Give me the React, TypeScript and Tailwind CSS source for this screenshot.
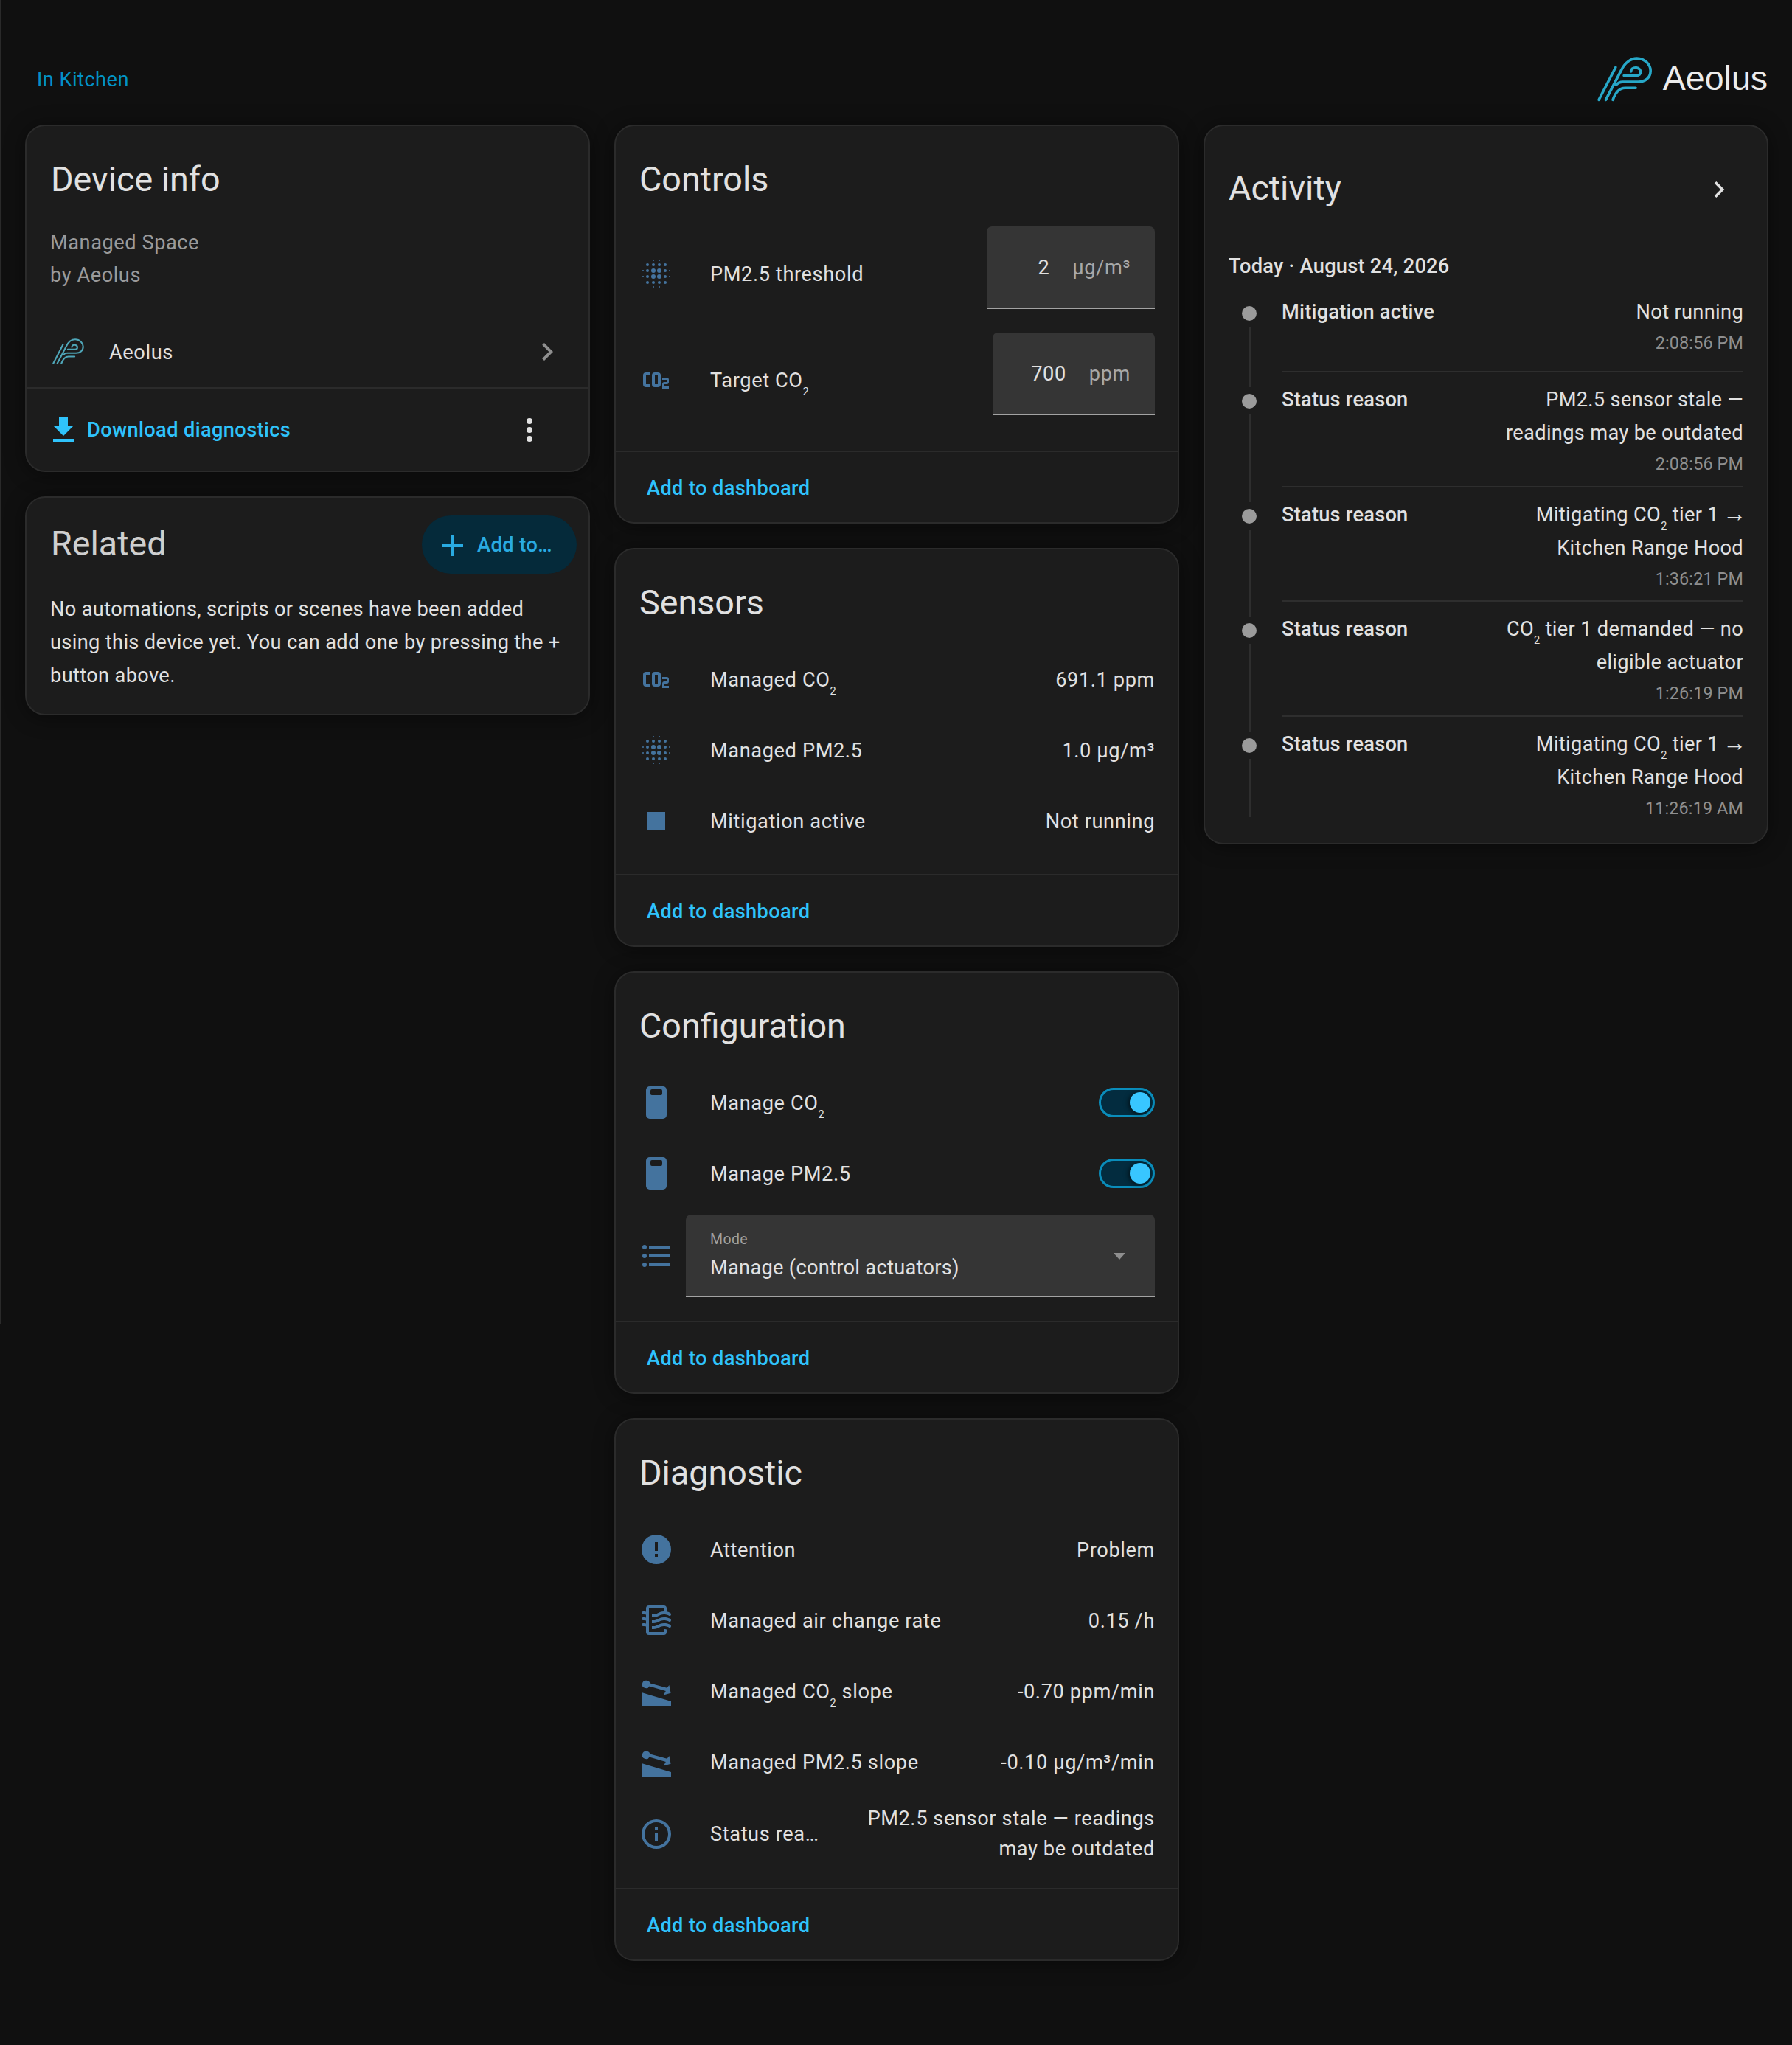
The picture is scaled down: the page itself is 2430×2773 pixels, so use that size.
import React from 'react';

const PATHS = {
  chevron: 'M8.59,16.58L13.17,12L8.59,7.41L10,6L16,12L10,18L8.59,16.58Z',
  download: 'M5,20H19V18H5M19,9H15V3H9V9H5L12,16L19,9Z',
  dots: 'M12,16A2,2 0 0,1 14,18A2,2 0 0,1 12,20A2,2 0 0,1 10,18A2,2 0 0,1 12,16M12,10A2,2 0 0,1 14,12A2,2 0 0,1 12,14A2,2 0 0,1 10,12A2,2 0 0,1 12,10M12,4A2,2 0 0,1 14,6A2,2 0 0,1 12,8A2,2 0 0,1 10,6A2,2 0 0,1 12,4Z',
  plus: 'M19,13H13V19H11V13H5V11H11V5H13V11H19V13Z',
  co2: 'M5,7A2,2 0 0,0 3,9V15A2,2 0 0,0 5,17H8V15H5V9H8V7H5M11,7A2,2 0 0,0 9,9V15A2,2 0 0,0 11,17H13A2,2 0 0,0 15,15V9A2,2 0 0,0 13,7H11M11,9H13V15H11V9M16,10.5V12H19V13.5H17.5A1.5,1.5 0 0,0 16,15V18H20.5V16.5H17.5V15H19A1.5,1.5 0 0,0 20.5,13.5V12A1.5,1.5 0 0,0 19,10.5H16Z',
  stop: 'M18,18H6V6H18V18Z',
  remote: 'M7.5,1H16.5A2.5,2.5 0 0,1 19,3.5V20.5A2.5,2.5 0 0,1 16.5,23H7.5A2.5,2.5 0 0,1 5,20.5V3.5A2.5,2.5 0 0,1 7.5,1ZM9,3A1,1 0 0,0 8,4V6A1,1 0 0,0 9,7H15A1,1 0 0,0 16,6V4A1,1 0 0,0 15,3H9Z',
  list: 'M7,5H21V7H7V5M7,13V11H21V13H7M4,4.5A1.5,1.5 0 0,1 5.5,6A1.5,1.5 0 0,1 4,7.5A1.5,1.5 0 0,1 2.5,6A1.5,1.5 0 0,1 4,4.5M4,10.5A1.5,1.5 0 0,1 5.5,12A1.5,1.5 0 0,1 4,13.5A1.5,1.5 0 0,1 2.5,12A1.5,1.5 0 0,1 4,10.5M7,19V17H21V19H7M4,16.5A1.5,1.5 0 0,1 5.5,18A1.5,1.5 0 0,1 4,19.5A1.5,1.5 0 0,1 2.5,18A1.5,1.5 0 0,1 4,16.5Z',
  alert: 'M13,13H11V7H13M13,17H11V15H13M12,2A10,10 0 0,0 2,12A10,10 0 0,0 12,22A10,10 0 0,0 22,12A10,10 0 0,0 12,2Z',
  info: 'M11,9H13V7H11M12,20C7.59,20 4,16.41 4,12C4,7.59 7.59,4 12,4C16.41,4 20,7.59 20,12C20,16.41 16.41,20 12,20M12,2A10,10 0 0,0 2,12A10,10 0 0,0 12,22A10,10 0 0,0 22,12A10,10 0 0,0 12,2M11,17H13V11H11V17Z',
  air: 'M19,18.31V20A2,2 0 0,1 17,22H7A2,2 0 0,1 5,20V16.3C4.54,16.12 3.95,16 3,16A1,1 0 0,1 2,15A1,1 0 0,1 3,14C3.82,14 4.47,14.08 5,14.21V12.3C4.54,12.12 3.95,12 3,12A1,1 0 0,1 2,11A1,1 0 0,1 3,10C3.82,10 4.47,10.08 5,10.21V8.3C4.54,8.12 3.95,8 3,8A1,1 0 0,1 2,7A1,1 0 0,1 3,6C3.82,6 4.47,6.08 5,6.21V4A2,2 0 0,1 7,2H17A2,2 0 0,1 19,4V6.16C20.78,6.47 21.54,7.13 21.71,7.29C22.1,7.68 22.1,8.32 21.71,8.71C21.32,9.1 20.8,9.09 20.29,8.71C20.29,8.71 19.25,8 17,8C15.74,8 14.91,8.41 13.95,8.9C12.91,9.41 11.74,10 10,10C9.64,10 9.31,10 9,9.96V7.95C9.3,8 9.63,8 10,8C11.26,8 12.09,7.59 13.05,7.11C14.09,6.59 15.27,6 17,6V4H7V20H17V18C18.5,18 18.97,18.29 19,18.31ZM17,10C15.27,10 14.09,10.59 13.05,11.11C12.09,11.59 11.26,12 10,12C9.63,12 9.3,12 9,11.95V13.96C9.31,14 9.64,14 10,14C11.74,14 12.91,13.41 13.95,12.9C14.91,12.41 15.74,12 17,12C19.25,12 20.29,12.71 20.29,12.71C20.8,13.09 21.32,13.1 21.71,12.71C22.1,12.32 22.1,11.68 21.71,11.29C21.54,11.13 20.41,10 17,10ZM17,14C15.27,14 14.09,14.59 13.05,15.11C12.09,15.59 11.26,16 10,16C9.63,16 9.3,16 9,15.95V17.96C9.3,18 9.64,18 10,18C11.74,18 12.91,17.41 13.95,16.9C14.91,16.41 15.74,16 17,16C19.25,16 20.29,16.71 20.29,16.71C20.8,17.09 21.32,17.1 21.71,16.71C22.1,16.32 22.1,15.68 21.71,15.29C21.54,15.13 20.41,14 17,14Z',
  slope: 'M22,19V22H2V13L22,19ZM5.3,4.9A2.6,2.6 0 0,1 7.8,6.8L19.3,9.9L20.7,8L21.8,13.4L16.9,14.7L18.4,12L7.3,8.7A2.6,2.6 0 1,1 5.3,4.9Z',
};

// mdi-blur drawn as separate dots
const BLUR_DOTS: [number, number, number][] = [
  [10, 10, 1.5], [14, 10, 1.5], [10, 14, 1.5], [14, 14, 1.5],
  [6, 6, 1], [10, 6, 1], [14, 6, 1], [18, 6, 1],
  [6, 10, 1], [18, 10, 1], [6, 14, 1], [18, 14, 1],
  [6, 18, 1], [10, 18, 1], [14, 18, 1], [18, 18, 1],
  [3, 10, 0.5], [3, 14, 0.5], [21, 10, 0.5], [21, 14, 0.5],
  [10, 3, 0.5], [14, 3, 0.5], [10, 21, 0.5], [14, 21, 0.5],
];

function Mdi({ d, className }: { d: string; className?: string }) {
  return (
    <svg viewBox="0 0 24 24" className={className} fill="currentColor" fillRule="evenodd">
      <path d={d} />
    </svg>
  );
}

function BlurIcon() {
  return (
    <svg viewBox="0 0 24 24" className="w-[48px] h-[48px] text-[#44739e]" fill="currentColor">
      {BLUR_DOTS.map(([cx, cy, r]) => (
        <circle key={`${cx}-${cy}`} cx={cx} cy={cy} r={r} />
      ))}
    </svg>
  );
}

function StateIcon({ d }: { d: string }) {
  return <Mdi d={d} className="w-[48px] h-[48px] text-[#44739e]" />;
}

function AeolusLogo({ className }: { className?: string }) {
  return (
    <svg viewBox="0 0 94 75" className={className} fill="none" stroke="currentColor" strokeWidth={3.8} strokeLinecap="round" strokeLinejoin="round">
      <path d="M9.5 66 L33.3 20" />
      <path d="M19.3 66 L41.7 23.3 C46.7 13.3 55 7.3 63.3 7.3 C75 7.3 82.7 16.7 82.7 25 C82.7 35 75 40.7 65 40.7 L43.3 40.7 C39 40.7 36.5 42 34 45" />
      <path d="M29.3 66 C33.3 55 38.3 49.3 46.7 49.3 L61.7 49.3" />
      <path d="M45 31.7 L63.3 31.7 C70 31.7 70.7 21.7 62.7 20.7 C57.3 20 55 23.3 55 26" />
    </svg>
  );
}

function Co2() {
  return (
    <>
      CO<sub className="static align-[-11px] text-[14.5px]">2</sub>
    </>
  );
}

function Arrow() {
  return <span className="ml-[-2px] mr-[-4px] font-['Liberation_Sans',sans-serif] text-[32px] leading-[0] tracking-normal">→</span>;
}

function Card({ children, className = '' }: { children: React.ReactNode; className?: string }) {
  return (
    <div className={`rounded-[27px] border-2 border-[#2b2b2b] bg-[#1c1c1c] shadow-[0_3px_28px_rgba(0,0,0,0.45)] overflow-hidden ${className}`}>
      {children}
    </div>
  );
}

function Title({ children, className = 'text-[#e1e1e1]' }: { children: React.ReactNode; className?: string }) {
  return <h2 className={`mt-[2px] ml-[1px] h-[67px] leading-[70px] text-[46.67px] tracking-normal font-normal ${className}`}>{children}</h2>;
}

function Footer() {
  return (
    <div className="h-[97px] pt-[4px] border-t-2 border-[#2b2b2b] pl-[42px] flex items-center tracking-[0.38px] font-medium text-[#2fc3fb]">
      Add to dashboard
    </div>
  );
}

function Row({ icon, label, value, children }: { icon: React.ReactNode; label: React.ReactNode; value?: React.ReactNode; children?: React.ReactNode }) {
  return (
    <div className="h-[96px] flex items-center text-[#e1e1e1]">
      <div className="w-[97px] shrink-0">{icon}</div>
      <div className="flex-1 pt-[2px]">{label}</div>
      {value && <div className="pt-[2px] text-right">{value}</div>}
      {children}
    </div>
  );
}

function NumberInput({ value, unit, width }: { value: string; unit: string; width: string }) {
  return (
    <div className="h-[144px] flex items-center text-[#e1e1e1]">
      <div className={`${width} h-[112px] mt-[-16px] pt-[2px] bg-[#353535] rounded-t-[7px] border-b-2 border-[#a3a3a3] flex items-center justify-end pr-[33px] gap-[31px] ml-auto`}>
        <span>{value}</span>
        <span className="text-[#a8a8a8]">{unit}</span>
      </div>
    </div>
  );
}

function Toggle() {
  return (
    <div className="w-[76px] h-[40px] rounded-full border-[3px] border-[#0a8dbb] bg-[#032c3f] flex items-center justify-end pr-[3px]">
      <div className="w-[28px] h-[28px] rounded-full bg-[#38c6ff] shadow-[-2px_1px_6px_rgba(0,0,0,0.6)]" />
    </div>
  );
}

function TimelineItem({ label, lines, time, pb, last }: { label: string; lines: React.ReactNode[]; time: string; pb: string; last?: boolean }) {
  return (
    <div className="flex">
      <div className="w-[56px] mr-[16px] shrink-0 flex flex-col items-center pt-[9px]">
        <div className="w-[20px] h-[20px] rounded-full bg-[#9b9b9b]" />
        <div className="w-[3px] flex-1 mt-[8px] bg-[#2e2e2e]" />
      </div>
      <div className={`flex-1 mt-[-5px] flex ${last ? 'mb-[-8px]' : 'mb-[20px] border-b-2 border-[#2e2e2e]'} ${pb}`}>
        <div className="w-[240px] shrink-0 font-medium tracking-[0.25px] text-[#e1e1e1] leading-[45px]">{label}</div>
        <div className="flex-1 text-right tracking-[0.34px]">
          {lines.map((l, i) => (
            <div key={i} className="leading-[45px] text-[#e1e1e1]">{l}</div>
          ))}
          <div className="leading-[39px] text-[23.33px] tracking-[0.15px] text-[#8f8f8f]">{time}</div>
        </div>
      </div>
    </div>
  );
}

export default function App() {
  return (
    <div className="flex w-[2430px] min-h-[2773px] bg-[#101010] font-[Roboto,sans-serif] text-[27.2px] tracking-[0.6px]">
      <div className="w-[2px] h-[1795px] shrink-0 bg-[#2a2a2a]" />
      <main className="flex-1">
        <header className="h-[169px] pl-[48px] pr-[33px] flex justify-between">
          <a className="mt-[91px] h-[34px] leading-[34px] text-[#0391c6] tracking-[0.45px]">In Kitchen</a>
          <div className="mt-[72px] h-[72px] flex items-center gap-[6px]">
            <AeolusLogo className="w-[90px] h-[72px] text-[#27a8c8]" />
            <span className="mt-[-2px] font-['Liberation_Sans',sans-serif] text-[46.5px] tracking-normal text-[#ececec]">Aeolus</span>
          </div>
        </header>

        <div className="pl-[32px] flex gap-[33px] items-start">
          {/* left column */}
          <div className="w-[766px] flex flex-col gap-[33px]">
            <Card>
              <div className="pt-[35px] px-[32px]">
                <Title>Device info</Title>
                <div className="mt-[32px] leading-[44px] tracking-[0.55px] text-[#9a9a9a]">
                  <div>Managed Space</div>
                  <div>by Aeolus</div>
                </div>
              </div>
              <div className="mt-[34px] h-[96px] pl-[31px] pr-[32px] flex items-center text-[#e1e1e1]">
                <AeolusLogo className="w-[52px] h-[42px] text-[#4fa6b8]" />
                <span className="ml-[29px] pt-[2px] flex-1">Aeolus</span>
                <Mdi d={PATHS.chevron} className="w-[48px] h-[48px] text-[#8f8f8f]" />
              </div>
              <div className="h-[113px] pt-[1px] border-t-2 border-[#2b2b2b] pl-[26px] pr-[56px] flex items-center">
                <Mdi d={PATHS.download} className="w-[48px] h-[48px] text-[#2fc3fb]" />
                <span className="ml-[8px] flex-1 tracking-[0.38px] font-medium text-[#2fc3fb]">Download diagnostics</span>
                <Mdi d={PATHS.dots} className="w-[48px] h-[48px] text-[#e1e1e1]" />
              </div>
            </Card>

            <Card>
              <div className="pt-[24px] pl-[32px] pr-[16px] flex justify-between items-start">
                <Title className="mt-[3px] text-[#cfcfcf]">Related</Title>
                <div className="w-[210px] h-[79px] pt-[2px] rounded-full bg-[#052a3a] pl-[18px] flex items-center text-[#29abe2] font-medium tracking-[0.45px]">
                  <Mdi d={PATHS.plus} className="w-[48px] h-[48px]" />
                  <span className="ml-[9px]">Add to…</span>
                </div>
              </div>
              <p className="pt-[26px] pb-[29px] px-[32px] leading-[45px] text-[#e1e1e1] tracking-[0.36px]">
                No automations, scripts or scenes have been added using this device yet. You can add one by pressing the + button above.
              </p>
            </Card>
          </div>

          {/* middle column */}
          <div className="w-[766px] flex flex-col gap-[33px]">
            <Card>
              <div className="pt-[35px] pb-[24px] px-[31px]">
                <Title>Controls</Title>
              </div>
              <div className="px-[31px] pb-[24px]">
                <div className="flex">
                  <div className="flex-1 h-[144px] flex items-center text-[#e1e1e1]">
                    <div className="w-[97px]"><BlurIcon /></div>
                    <span className="pt-[2px]">PM2.5 threshold</span>
                  </div>
                  <NumberInput value="2" unit="μg/m³" width="w-[228px]" />
                </div>
                <div className="flex">
                  <div className="flex-1 h-[144px] flex items-center text-[#e1e1e1]">
                    <div className="w-[97px]"><StateIcon d={PATHS.co2} /></div>
                    <span className="pt-[2px]">Target <Co2 /></span>
                  </div>
                  <NumberInput value="700" unit="ppm" width="w-[220px]" />
                </div>
              </div>
              <Footer />
            </Card>

            <Card>
              <div className="pt-[35px] pb-[24px] px-[31px]">
                <Title>Sensors</Title>
              </div>
              <div className="px-[31px] pb-[24px]">
                <Row icon={<StateIcon d={PATHS.co2} />} label={<>Managed <Co2 /></>} value="691.1 ppm" />
                <Row icon={<BlurIcon />} label="Managed PM2.5" value="1.0 μg/m³" />
                <Row icon={<StateIcon d={PATHS.stop} />} label="Mitigation active" value="Not running" />
              </div>
              <Footer />
            </Card>

            <Card>
              <div className="pt-[35px] pb-[24px] px-[31px]">
                <Title>Configuration</Title>
              </div>
              <div className="px-[31px] pb-[24px]">
                <Row icon={<StateIcon d={PATHS.remote} />} label={<>Manage <Co2 /></>}><Toggle /></Row>
                <Row icon={<StateIcon d={PATHS.remote} />} label="Manage PM2.5"><Toggle /></Row>
                <div className="h-[128px] flex items-center">
                  <div className="w-[64px] shrink-0"><StateIcon d={PATHS.list} /></div>
                  <div className="flex-1 h-[112px] pt-[2px] bg-[#353535] rounded-t-[7px] border-b-2 border-[#a3a3a3] pl-[33px] pr-[40px] flex items-center justify-between">
                    <div>
                      <div className="text-[19.5px] leading-[28px] tracking-[0.4px] text-[#a0a0a0]">Mode</div>
                      <div className="mt-[4px] leading-[40px] tracking-[0.3px] text-[#e1e1e1]">Manage (control actuators)</div>
                    </div>
                    <div className="w-0 h-0 border-x-[8px] border-x-transparent border-t-[9px] border-t-[#8f8f8f]" />
                  </div>
                </div>
              </div>
              <Footer />
            </Card>

            <Card>
              <div className="pt-[35px] pb-[24px] px-[31px]">
                <Title>Diagnostic</Title>
              </div>
              <div className="px-[31px] pb-[24px]">
                <Row icon={<StateIcon d={PATHS.alert} />} label="Attention" value="Problem" />
                <Row icon={<StateIcon d={PATHS.air} />} label="Managed air change rate" value="0.15 /h" />
                <Row icon={<StateIcon d={PATHS.slope} />} label={<>Managed <Co2 /> slope</>} value="-0.70 ppm/min" />
                <Row icon={<StateIcon d={PATHS.slope} />} label="Managed PM2.5 slope" value="-0.10 μg/m³/min" />
                <div className="h-[99px] flex items-center text-[#e1e1e1]">
                  <div className="w-[97px] shrink-0"><StateIcon d={PATHS.info} /></div>
                  <div className="flex-1 pt-[2px]">Status rea…</div>
                  <div className="w-[392px] shrink-0 text-right leading-[41px]">PM2.5 sensor stale — readings may be outdated</div>
                </div>
              </div>
              <Footer />
            </Card>
          </div>

          {/* right column */}
          <div className="w-[766px]">
            <Card className="pb-[35px]">
              <div className="pt-[47px] pl-[31px] pr-[43px] flex justify-between items-center">
                <Title className="ml-0 text-[#e1e1e1]">Activity</Title>
                <Mdi d={PATHS.chevron} className="mt-[8px] w-[44px] h-[44px] text-[#e1e1e1]" />
              </div>
              <div className="pl-[32px] pr-[32px]">
                <div className="mt-[52px] h-[44px] leading-[44px] font-medium tracking-[0.27px] text-[#e1e1e1]">Today · August 24, 2026</div>
                <div className="mt-[23px]">
                  <TimelineItem label="Mitigation active" lines={['Not running']} time="2:08:56 PM" pb="pb-[18px]" />
                  <TimelineItem label="Status reason" lines={['PM2.5 sensor stale —', 'readings may be outdated']} time="2:08:56 PM" pb="pb-[9.5px]" />
                  <TimelineItem label="Status reason" lines={[<>Mitigating <Co2 /> tier 1 <Arrow /></>, 'Kitchen Range Hood']} time="1:36:21 PM" pb="pb-[9.5px]" />
                  <TimelineItem label="Status reason" lines={[<><Co2 /> tier 1 demanded — no</>, 'eligible actuator']} time="1:26:19 PM" pb="pb-[9.5px]" />
                  <TimelineItem label="Status reason" lines={[<>Mitigating <Co2 /> tier 1 <Arrow /></>, 'Kitchen Range Hood']} time="11:26:19 AM" pb="" last />
                </div>
              </div>
            </Card>
          </div>
        </div>
      </main>
    </div>
  );
}
